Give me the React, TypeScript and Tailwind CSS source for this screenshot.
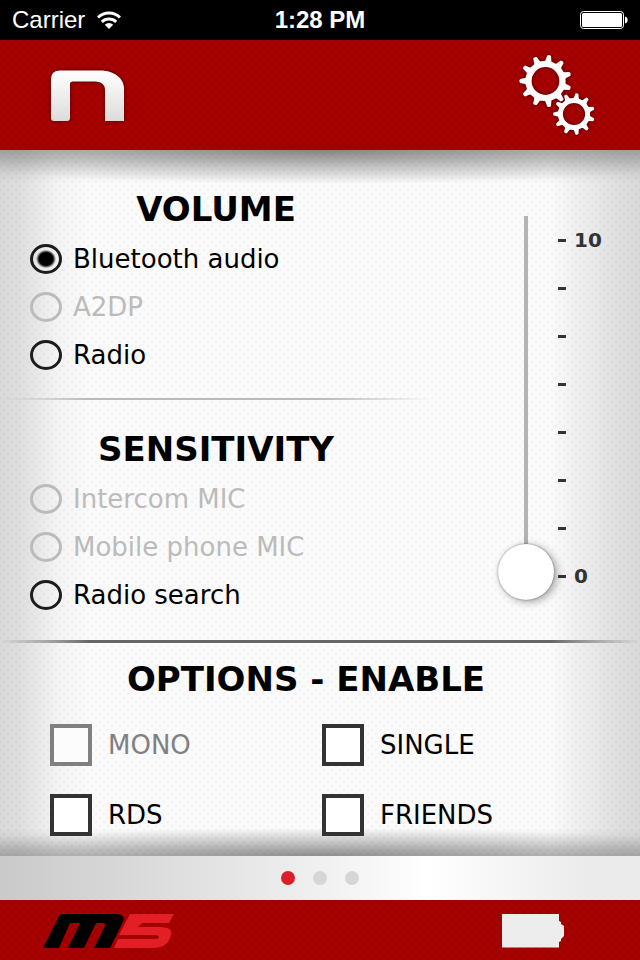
import { useState } from "react"
import clsx from "clsx"

interface Option {
  id: string
  label: string
  disabled?: boolean
}

const volumeOptions: Option[] = [
  { id: "bluetooth", label: "Bluetooth audio" },
  { id: "a2dp", label: "A2DP", disabled: true },
  { id: "radio", label: "Radio" },
]

const sensitivityOptions: Option[] = [
  { id: "intercom-mic", label: "Intercom MIC", disabled: true },
  { id: "phone-mic", label: "Mobile phone MIC", disabled: true },
  { id: "radio-search", label: "Radio search" },
]

const enableOptions: Option[] = [
  { id: "mono", label: "MONO", disabled: true },
  { id: "single", label: "SINGLE" },
  { id: "rds", label: "RDS" },
  { id: "friends", label: "FRIENDS" },
]

const scale = ["10", "", "", "", "", "", "", "0"]

const redTexture =
  "bg-[#ac0000] bg-[radial-gradient(circle,#920000_0%,transparent_55%),radial-gradient(circle,#920000_0%,transparent_55%)] bg-[length:8px_8px] bg-[position:0_0,4px_4px]"

function StatusBar() {
  return (
    <div className="grid h-10 grid-cols-3 items-center bg-black px-3 font-['Liberation_Sans',sans-serif] text-2xl text-white">
      <div className="flex items-center gap-3">
        <span>Carrier</span>
        <svg className="h-[18px] w-6" viewBox="0 0 24 18" fill="none" stroke="currentColor" strokeWidth="3">
          <path d="M1 6.5a16 16 0 0 1 22 0" />
          <path d="M4.8 10.8a10.5 10.5 0 0 1 14.4 0" />
          <path d="M12 18l-4.2-4.2a6 6 0 0 1 8.4 0z" fill="currentColor" stroke="none" />
        </svg>
      </div>
      <span className="text-center font-bold">1:28 PM</span>
      <svg className="h-5 w-[49px] justify-self-end" viewBox="0 0 49 20">
        <rect x="1.5" y="1.5" width="43" height="17" rx="3" fill="none" stroke="#fff" />
        <rect x="3" y="3" width="40" height="14" rx="1.5" fill="#fff" />
        <path d="M46 6.5c3.500 .8 3.500 6.2 0 7z" fill="#fff" />
      </svg>
    </div>
  )
}

function Gear({ cx, cy, scale }: { cx: number; cy: number; scale: number }) {
  return (
    <g transform={`translate(${cx} ${cy}) scale(${scale})`}>
      <circle r="17" fill="none" stroke="#fff" strokeWidth="6.2" />
      {Array.from({ length: 11 }, (_, i) => (
        <path
          key={i}
          d="M-18.500 -4.4L-20.500 -3L-25.500 -1.9Q-27 0 -25.500 1.9L-20.500 3L-18.500 4.4z"
          fill="#fff"
          transform={`rotate(${(i * 360) / 11})`}
        />
      ))}
    </g>
  )
}

function Header() {
  return (
    <header className={clsx("flex h-[110px] items-start justify-between pr-11 pl-[50px]", redTexture)}>
      <svg className="mt-[30px] h-[54px] w-[76px] drop-shadow-[0_0_2px_rgba(0,0,0,0.5)]" viewBox="0 0 76 54">
        <defs>
          <linearGradient id="logo" x2="0" y2="1">
            <stop offset="0" stopColor="#fff" />
            <stop offset="1" stopColor="#dcdcdc" />
          </linearGradient>
        </defs>
        <path
          d="M10 .5H50C65 .5 74 9 74 18V51H55V20C55 14 51 11.500 43 11.500H23Q20 11.500 20 14V48Q20 51 17 51H4Q1 51 1 48V9Q1 .5 10 .5z"
          fill="url(#logo)"
        />
      </svg>
      <button type="button" aria-label="Settings" className="mt-3">
        <svg className="h-[86px] w-[80px] drop-shadow-[0_0_2px_rgba(0,0,0,0.5)]" viewBox="0 0 80 86">
          <Gear cx={29.5} cy={29} scale={1} />
          <Gear cx={58} cy={62} scale={0.8} />
        </svg>
      </button>
    </header>
  )
}

function Heading({ children, className }: { children: string; className?: string }) {
  return (
    <h2 className={clsx("text-center text-[34px] leading-[48px] font-bold text-black", className)}>{children}</h2>
  )
}

interface RadioGroupProps {
  title: string
  options: Option[]
  value: string
  onChange: (id: string) => void
}

function RadioGroup({ title, options, value, onChange }: RadioGroupProps) {
  return (
    <section>
      <Heading className="mb-0.5">{title}</Heading>
      {options.map((option) => (
        <label
          key={option.id}
          className={clsx("flex h-12 items-center gap-[11px] pl-[30px]", option.disabled && "text-[#bbb]")}
        >
          <input
            type="radio"
            name="source"
            checked={value === option.id}
            disabled={option.disabled}
            onChange={() => onChange(option.id)}
            className="h-[30px] w-8 appearance-none rounded-[50%] border-3 border-[#1c1c1c] checked:bg-[radial-gradient(ellipse_at_center,#000_0_7px,transparent_10px)] disabled:border-[#bbb]"
          />
          {option.label}
        </label>
      ))}
    </section>
  )
}

function LevelSlider() {
  const [level, setLevel] = useState(0)

  return (
    <div className="flex pt-[66px] pb-10 pl-[66px]">
      <input
        type="range"
        aria-label="Level"
        min={0}
        max={10}
        value={level}
        onChange={(e) => setLevel(Number(e.target.value))}
        className="w-14 appearance-none bg-[linear-gradient(#b3b3b3,#b3b3b3)] bg-[length:4px_100%] bg-center bg-no-repeat [direction:rtl] [writing-mode:vertical-lr] [&::-webkit-slider-thumb]:h-14 [&::-webkit-slider-thumb]:w-14 [&::-webkit-slider-thumb]:appearance-none [&::-webkit-slider-thumb]:rounded-full [&::-webkit-slider-thumb]:bg-white [&::-webkit-slider-thumb]:shadow-[0_0_2px_rgba(0,0,0,0.5),3px_2px_8px_rgba(0,0,0,0.35)]"
      />
      <ul className="mt-3 mb-3 ml-1 flex flex-col justify-between text-xl leading-6 font-bold text-[#333]">
        {scale.map((mark, i) => (
          <li key={i} className="flex h-6 items-center gap-2">
            <span className="h-[3px] w-2 bg-[#333]" />
            {mark}
          </li>
        ))}
      </ul>
    </div>
  )
}

function EnableOptions() {
  const [enabled, setEnabled] = useState<string[]>([])

  const toggle = (id: string) =>
    setEnabled((prev) => (prev.includes(id) ? prev.filter((x) => x !== id) : [...prev, id]))

  return (
    <section className="pt-3 pb-5">
      <Heading className="pr-7">OPTIONS - ENABLE</Heading>
      <div className="mt-[21px] grid grid-cols-2 gap-y-7 pr-[46px] pl-[50px]">
        {enableOptions.map((option) => (
          <label
            key={option.id}
            className={clsx("flex items-center gap-4", option.disabled && "text-[#808080]")}
          >
            <input
              type="checkbox"
              checked={enabled.includes(option.id)}
              disabled={option.disabled}
              onChange={() => toggle(option.id)}
              className="h-[42px] w-[42px] appearance-none border-4 border-[#333] bg-white checked:bg-[#999] disabled:border-[#808080] disabled:bg-[#fcfcfc]"
            />
            {option.label}
          </label>
        ))}
      </div>
    </section>
  )
}

function Pager() {
  return (
    <nav className="flex h-11 items-center justify-center gap-[18px] bg-[linear-gradient(90deg,#cacaca_0%,#cecece_6%,#f0f0f0_50%,#fff_67%,#ebebeb_92%)]">
      <button type="button" aria-label="Page 1" className="h-3.5 w-3.5 rounded-full bg-[#da1f28]" />
      <button type="button" aria-label="Page 2" className="h-3.5 w-3.5 rounded-full bg-[#d6d6d6]" />
      <button type="button" aria-label="Page 3" className="h-3.5 w-3.5 rounded-full bg-[#d6d6d6]" />
    </nav>
  )
}

function Footer() {
  return (
    <footer className={clsx("flex h-[60px] items-start justify-between pt-3.5 pr-[75px] pl-[42px]", redTexture)}>
      <svg className="h-[35px] w-[133px]" viewBox="0 0 133 35">
        <path
          d="M18 0H75Q85 1 80 10L68 34H52L63 12Q64 9 60 9H54L42 34H26L38 9H28L17 34H1z"
          fill="#000"
        />
        <path
          d="M88 0H132L127 9H100L96 13H118Q131 13 129 21Q126 34 111 34H72L76 25H112Q117 25 117 23Q117 21 112 21H77z"
          fill="#e31e24"
        />
      </svg>
      <svg className="h-[34px] w-[63px]" viewBox="0 0 63 34">
        <path d="M0 0H57V7L59 8V10L62 12V22L59 25V27L57 28V33.500H0z" fill="#ededed" />
      </svg>
    </footer>
  )
}

export default function App() {
  const [source, setSource] = useState("bluetooth")

  return (
    <div className="flex flex-col bg-black">
      <StatusBar />
      <Header />
      <main className="bg-[radial-gradient(70%_34px_at_50%_0,#00000058,#00000030_45%,transparent),radial-gradient(70%_28px_at_50%_100%,#00000050,#00000028_50%,transparent),linear-gradient(#00000030,#00000012_16px,transparent_34px,transparent_calc(100%-28px),#00000010_calc(100%-14px),#0000002c),radial-gradient(circle,#00000007_0_1px,transparent_2px),radial-gradient(circle,#00000007_0_1px,transparent_2px),linear-gradient(90deg,#dadada,#dedede_3%,#f4f4f4_9%,#fbfbfb_14%,#fbfbfb_86%,#f0f0f0_90%,#dedede_97%,#dadada)] bg-[length:auto,auto,auto,8px_8px,8px_8px,auto] bg-[position:0_0,0_0,0_0,0_0,4px_4px,0_0] font-['DejaVu_Sans',sans-serif] text-[26px]">
        <div className="grid grid-cols-[432fr_208fr]">
          <div className="pt-[35px] pb-[21px]">
            <RadioGroup title="VOLUME" options={volumeOptions} value={source} onChange={setSource} />
            <hr className="mt-[19px] mb-[25px] h-0.5 border-0 bg-[linear-gradient(90deg,transparent,#bbb_20%,#bbb_75%,transparent)]" />
            <RadioGroup title="SENSITIVITY" options={sensitivityOptions} value={source} onChange={setSource} />
          </div>
          <LevelSlider />
        </div>
        <hr className="h-[3px] border-0 bg-[linear-gradient(90deg,transparent,#666_14%,#666_86%,transparent)]" />
        <EnableOptions />
      </main>
      <Pager />
      <Footer />
    </div>
  )
}
